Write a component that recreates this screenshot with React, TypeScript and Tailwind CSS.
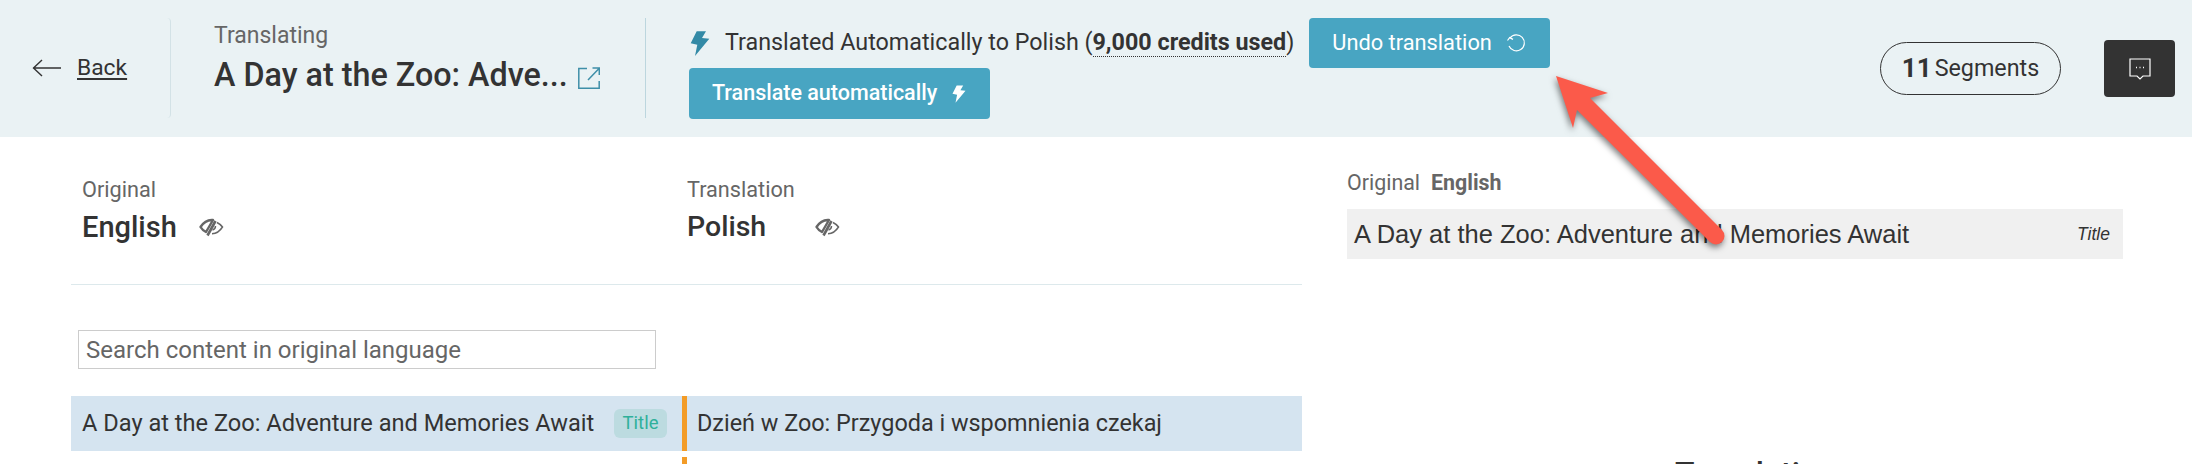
function Bolt({ className }: { className: string }) {
  return (
    <svg viewBox="0 0 20 25" className={className} fill="currentColor">
      <polygon points="6.7,0.3 16,0.3 12,7 19.3,7.7 5,25 7.3,13.7 0.7,12.3" />
    </svg>
  );
}

function Eye() {
  return (
    <svg viewBox="0 0 25 20" className="w-[25px] h-[20px] text-[#666]" fill="none" stroke="currentColor">
      <path d="M1.5 10 C5 4.5 9 2.5 14 3 L7 15 C5 14 3 12.5 1.5 10 Z" strokeWidth="2.4" strokeLinejoin="round" />
      <path d="M16.5 4 L8.5 18.5" strokeWidth="2.6" />
      <path d="M18 5.5 C20.5 6.8 22.5 8.3 23.5 10 C21 14 17.5 16.5 13 16.8" strokeWidth="1.5" />
      <path d="M16.5 9 C16.5 11 15.5 12.5 13.5 13" strokeWidth="1.5" />
    </svg>
  );
}

export default function App() {
  return (
    <div className="relative w-[2192px] h-[464px] overflow-hidden bg-white text-[#333] font-['Roboto',sans-serif]">
      <header className="h-[137px] bg-[#eaf2f4] flex items-start pt-[18px]">
        <div className="w-[171px] h-[100px] border-r border-[#d3e2e6] rounded-r flex items-center pl-[32px] gap-[15px]">
          <svg viewBox="0 0 30 20" className="w-[30px] h-[20px]" fill="none" stroke="#333" strokeWidth="1.4">
            <path d="M29 10 H1 M10 2 L1.5 10 L10 18" />
          </svg>
          <a className="text-[22.8px] underline underline-offset-[3px] leading-none mt-[1px]">Back</a>
        </div>
        <div className="w-[475px] h-[100px] border-r border-[#bcd6de] pl-[43px]">
          <div className="text-[23px] leading-[24px] text-[#666] mt-[6px]">Translating</div>
          <div className="flex items-center mt-[9px] gap-[10px]">
            <span className="text-[32.3px] leading-[36px] font-medium">A Day at the Zoo: Adve...</span>
            <svg viewBox="0 0 22 22" className="w-[22px] h-[22px] mt-[6px]" fill="none" stroke="#3f8fa8" strokeWidth="1.5">
              <path d="M9 1.5 H0.8 V21.2 H21.2 V14" />
              <path d="M10 13 L21 1.5 M14.5 1 H21.3 V8" />
            </svg>
          </div>
        </div>
        <div className="pl-[43px] flex flex-col items-start">
          <div className="h-[50px] flex items-center">
            <Bolt className="w-[20px] h-[25px] text-[#338aa6] ml-[1px]" />
            <span className="ml-[15px] text-[23.3px] leading-none whitespace-nowrap">
              Translated Automatically to Polish (<b className="font-bold border-b border-dotted border-[#333]">9,000 credits used</b>)
            </span>
            <button className="ml-[15px] h-[50px] w-[241px] bg-[#48a5c2] rounded text-white text-[21.8px] flex items-center pl-[23px] gap-[14px]">
              Undo translation
              <svg viewBox="0 0 20 20" className="w-[20px] h-[20px]" fill="none" stroke="white" strokeWidth="1.2">
                <path d="M4 5 A8 8 0 1 1 3 13" />
                <path d="M1.5 7.5 L3.7 4.6 L7 6.4" />
              </svg>
            </button>
          </div>
          <button className="h-[51px] w-[301px] bg-[#48a5c2] rounded text-white text-[21.5px] flex items-center pl-[23px] gap-[15px] font-medium">
            Translate automatically
            <Bolt className="w-[14px] h-[18px] text-white" />
          </button>
        </div>
        <div className="ml-auto flex items-center gap-[43px] pr-[17px] mt-[22px]">
          <div className="w-[181px] h-[53px] border border-[#333] rounded-full flex items-center justify-center text-[23.3px]">
            <b className="font-bold text-[26px] mr-[3px]">11</b>Segments
          </div>
          <div className="w-[71px] h-[57px] bg-[#333] rounded flex items-center justify-center">
            <svg viewBox="0 0 22 22" className="w-[22px] h-[22px]" fill="none" stroke="white" strokeWidth="1.2">
              <path d="M1 1 H21 V18 H14 L11 21 L8 18 H1 Z" />
              <path d="M7 9.5 H8 M10.5 9.5 H11.5 M14 9.5 H15" strokeWidth="1.4" />
            </svg>
          </div>
        </div>
      </header>
      <main className="flex pl-[71px]">
        <section className="w-[1231px]">
          <div className="h-[148px] border-b border-[#dde9ec] flex pl-[11px]">
            <div className="w-[605px]">
              <div className="text-[21.7px] leading-[24px] text-[#666] mt-[41px]">Original</div>
              <div className="flex items-center gap-[22px] mt-[9px]">
                <span className="text-[29px] leading-[32px] font-medium">English</span>
                <Eye />
              </div>
            </div>
            <div>
              <div className="text-[21.7px] leading-[24px] text-[#666] mt-[41px]">Translation</div>
              <div className="flex items-center gap-[49px] mt-[9px]">
                <span className="text-[28.5px] leading-[32px] font-medium">Polish</span>
                <Eye />
              </div>
            </div>
          </div>
          <div className="pl-[7px] pt-[45px]">
            <div className="w-[578px] h-[39px] border border-[#ccc] flex items-center pl-[7px] text-[24px] text-[#666]">
              Search content in original language
            </div>
          </div>
          <div className="mt-[27px] h-[55px] bg-[#d5e4f0] flex items-center">
            <div className="w-[611px] h-full flex items-center pl-[11px] pr-[15px] justify-between">
              <span className="text-[23.6px]">A Day at the Zoo: Adventure and Memories Await</span>
              <span className="w-[53px] h-[29px] rounded-md bg-[#bcdbe0] text-[#2fb09a] text-[18.5px] flex items-center justify-center">Title</span>
            </div>
            <div className="w-[5px] h-full bg-[#f39c27]" />
            <span className="ml-[10px] text-[23.4px]">Dzień w Zoo: Przygoda i wspomnienia czekaj</span>
          </div>
          <div className="mt-[6px] ml-[611px] w-[5px] h-[7px] bg-[#f39c27]" />
        </section>
        <section className="ml-[45px] w-[776px] font-['Liberation_Sans',sans-serif]">
          <div className="mt-[34px] flex gap-[11px] text-[21.4px] leading-[24px] text-[#666]">
            <span className="font-['Roboto',sans-serif]">Original</span>
            <b className="font-['Roboto',sans-serif] font-bold">English</b>
          </div>
          <div className="mt-[14px] h-[50px] bg-[#f0f0f0] flex items-center justify-between pl-[7px] pr-[13px]">
            <span className="text-[25.5px]">A Day at the Zoo: Adventure and Memories Await</span>
            <i className="text-[17.5px]">Title</i>
          </div>
          <div className="mt-[194px] pl-[328px] text-[32px] leading-[40px] font-['Roboto',sans-serif] font-medium">Translation</div>
        </section>
      </main>
      <svg
        viewBox="0 0 2192 464"
        className="absolute left-0 top-0 w-[2192px] h-[464px] pointer-events-none drop-shadow-[-1px_3px_3px_rgba(0,0,0,0.5)]"
      >
        <polygon points="1556,76 1608,93 1590,98 1722,230 1710,242 1577,110 1573,128" fill="#fb5a4a" />
        <circle cx="1716" cy="236" r="8.5" fill="#fb5a4a" />
      </svg>
    </div>
  );
}
